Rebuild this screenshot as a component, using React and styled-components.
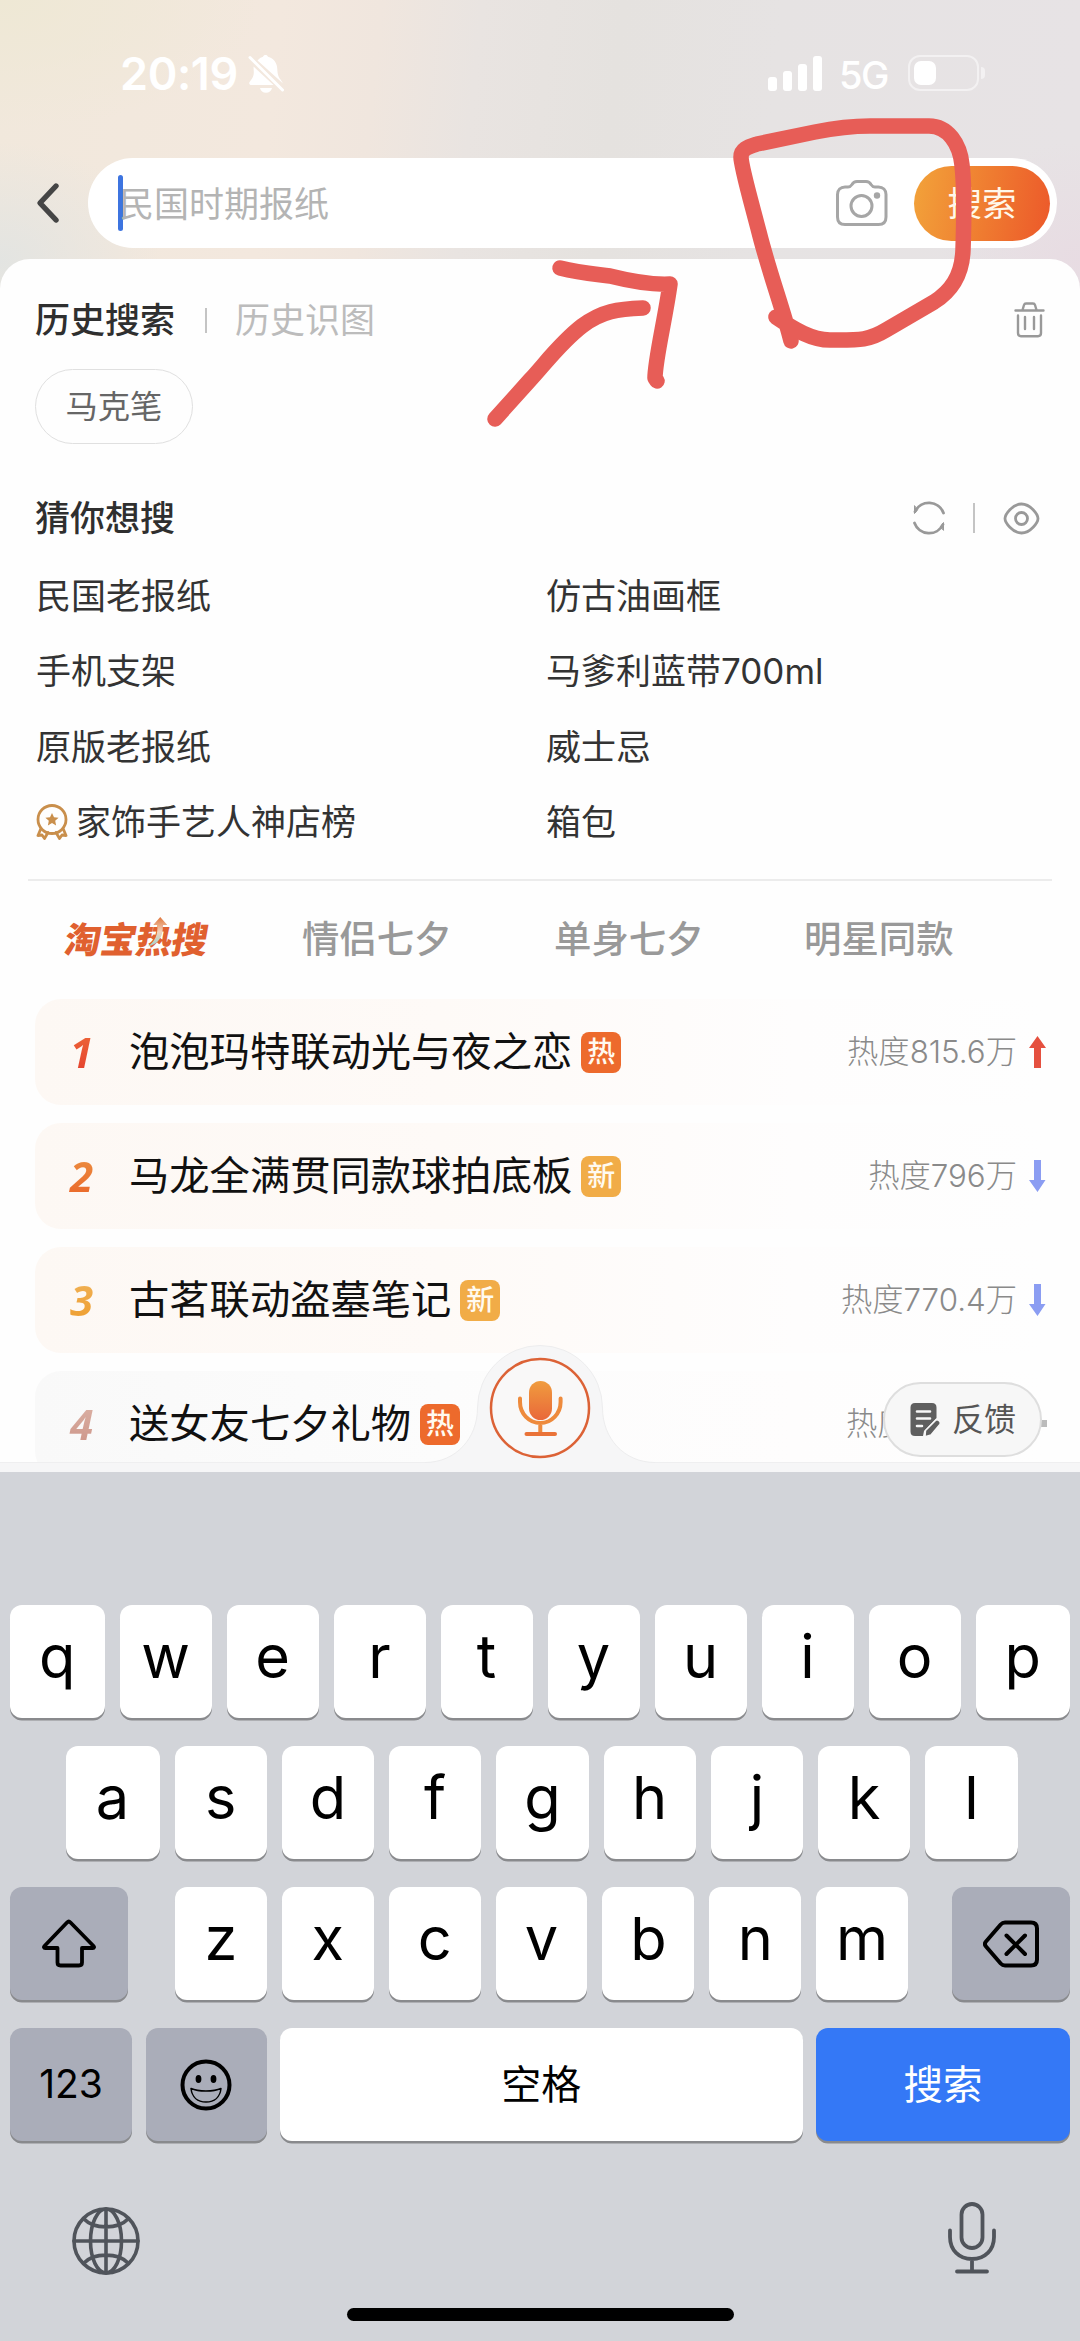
import React from "react";
import styled, { createGlobalStyle } from "styled-components";

const Global = createGlobalStyle`
  * { box-sizing: border-box; }
  body { margin: 0; background: #d2d4d9; }
  svg { display: block; flex: none; }
`;

const Phone = styled.div`
  position: relative;
  width: 1080px;
  height: 2341px;
  display: flex;
  flex-direction: column;
  overflow: hidden;
  font-family: Inter, "Noto Sans CJK SC", sans-serif;
  background:
    radial-gradient(260px 130px at 0 0, rgba(238, 232, 212, 0.9), rgba(238, 232, 212, 0)),
    radial-gradient(160px 120px at 0 262px, rgba(226, 228, 226, 0.95), rgba(226, 228, 226, 0)),
    radial-gradient(140px 120px at 1080px 262px, rgba(232, 218, 226, 0.8), rgba(232, 218, 226, 0)),
    linear-gradient(96deg, #f1e8dc 0, #f3e8de 280px, #f0e6de 380px, #e9e4e1 480px, #e5e2df 620px, #e6e3e3 780px, #e7e3e5 1080px);
`;

const StatusBar = styled.div`
  height: 158px;
  padding: 52px 95px 62px 120px;
  display: flex;
  align-items: center;
  color: #fff;
`;
const Clock = styled.span`
  width: 128px;
  font-size: 45px;
  line-height: 44px;
  font-weight: 600;
  letter-spacing: -0.4px;
`;
const Network = styled.span`
  margin: 2px 21px 0 17px;
  width: 48px;
  font-size: 38px;
  line-height: 44px;
  font-weight: 500;
  letter-spacing: -1.5px;
`;
const Bars = styled.div`
  margin: -2px 0 0 auto;
  display: flex;
  align-items: flex-end;
  gap: 6px;
  height: 35px;
`;
const Bar = styled.i`
  width: 9px;
  height: ${(p) => p.$h}px;
  border-radius: 3px;
  background: #fff;
`;
const Battery = styled.div`
  width: 71px;
  height: 36px;
  margin-top: -3px;
  padding: 4px;
  border: 2px solid rgba(255, 255, 255, 0.5);
  border-radius: 12px;
`;
const Charge = styled.div`
  width: 22px;
  height: 24px;
  border-radius: 7px;
  background: #fff;
`;
const Nub = styled.div`
  width: 4px;
  height: 12px;
  margin: -3px 0 0 2px;
  border-radius: 0 4px 4px 0;
  background: rgba(255, 255, 255, 0.5);
`;

const SearchRow = styled.div`
  height: 90px;
  margin-bottom: 11px;
  padding: 0 23px 0 35px;
  display: flex;
  align-items: center;
  gap: 28px;
`;
const SearchBox = styled.div`
  flex: 1;
  height: 90px;
  padding: 0 7px 0 30px;
  border-radius: 45px;
  background: #fff;
  display: flex;
  align-items: center;
`;
const Caret = styled.i`
  width: 5px;
  height: 56px;
  border-radius: 3px;
  background: #3d74e0;
`;
const Placeholder = styled.span`
  flex: 1;
  margin: 2px 0 0 -4px;
  font-size: 35px;
  line-height: 50px;
  color: #b4b4b4;
`;
const SearchButton = styled.button`
  width: 136px;
  height: 75px;
  margin-left: 26px;
  padding: 2px 0 0;
  border: 0;
  border-radius: 38px;
  font: 400 34.5px/50px Inter, "Noto Sans CJK SC", sans-serif;
  color: #fff8ea;
  background: linear-gradient(100deg, #f2a33a, #ef7a30 55%, #ec582a);
`;

const Panel = styled.main`
  position: relative;
  height: 1213px;
  padding-top: 31px;
  border-radius: 30px 30px 0 0;
  background: #fefefe;
  display: flex;
  flex-direction: column;
`;
const HeadRow = styled.div`
  height: 60px;
  margin-top: ${(p) => p.$top || 0}px;
  padding: 0 ${(p) => p.$right}px 0 35px;
  display: flex;
  align-items: center;
`;
const Heading = styled.h2`
  margin: 0;
  font-size: 35px;
  line-height: 50px;
  font-weight: ${(p) => (p.$muted ? 400 : 500)};
  color: ${(p) => (p.$muted ? "#bcbcbc" : "#2f2f2f")};
`;
const Separator = styled.i`
  width: 2px;
  height: ${(p) => p.$h}px;
  margin: 0 28px 0 ${(p) => p.$left || 30}px;
  background: #c4c4c4;
`;
const Spacer = styled.div`
  flex: 1;
`;
const Chip = styled.div`
  align-self: flex-start;
  height: 75px;
  margin: 19px 0 0 35px;
  padding: 1px 29.5px 0;
  border: 1.5px solid #e0e0e0;
  border-radius: 38px;
  font-size: 32.3px;
  line-height: 71px;
  color: #666;
`;
const Suggestions = styled.div`
  margin: 10px 0 0 36px;
  display: grid;
  grid-template-columns: 510px 1fr;
  grid-auto-rows: 75.5px;
`;
const Suggestion = styled.div`
  display: flex;
  align-items: center;
  gap: 8px;
  font-size: 35px;
  line-height: 50px;
  color: #333;
`;
const Rule = styled.div`
  height: 2px;
  margin: 19px 28px 0;
  background: #ececec;
`;
const Tabs = styled.div`
  height: 60px;
  margin-top: 29px;
  padding-left: 63px;
  display: grid;
  grid-template-columns: 239px 252px 250px 1fr;
  align-items: center;
`;
const Tab = styled.div`
  font-size: 37.4px;
  line-height: 50px;
  font-weight: 500;
  color: #999;
`;
const HotTab = styled.div`
  position: relative;
  width: 145px;
  left: 2px;
  font-size: 36px;
  line-height: 50px;
  font-weight: 900;
  letter-spacing: -0.3px;
  color: #e0602f;
  transform: skewX(-10deg);
`;
const HotArrow = styled.svg`
  position: absolute;
  left: 78px;
  top: 2px;
  transform: skewX(10deg);
`;
const HotList = styled.div`
  height: 463px;
  margin-top: 29px;
  padding: 0 33px 0 35px;
  overflow: hidden;
  display: flex;
  flex-direction: column;
  gap: 18px;
`;
const HotCard = styled.div`
  flex: none;
  height: 106px;
  border-radius: 26px;
  display: flex;
  align-items: center;
  background: linear-gradient(90deg, ${(p) => (p.$plain ? "#f9f9f9, #fcfcfc 40%" : "#fdf8f4, #fefaf7 40%")}, #fefdfd 75%, #fefefe);
`;
const Rank = styled.span`
  width: 94px;
  padding-left: 35px;
  font: italic 700 42px/50px "Noto Sans", "Open Sans", sans-serif;
  color: transparent;
  background: ${(p) => p.$fill};
  background-clip: text;
  -webkit-background-clip: text;
`;
const HotTitle = styled.span`
  font-size: 40.3px;
  line-height: 56px;
  color: #111;
`;
const Badge = styled.span`
  width: 40px;
  height: 41px;
  margin-left: 9px;
  border-radius: 8px;
  text-align: center;
  font-size: 28px;
  line-height: 40px;
  font-weight: 500;
  color: #fffaf0;
  background: ${(p) => (p.$kind === "热" ? "#ed6a2c" : "#f1ac47")};
`;
const Heat = styled.span`
  margin-left: auto;
  width: ${(p) => (p.$covered ? "171px" : "auto")};
  font-size: 31.3px;
  line-height: 44px;
  font-weight: 300;
  color: #8a8a8a;
`;
const Trend = styled.div`
  width: 30px;
  padding-left: 12px;
`;
const Strip = styled.div`
  height: 10px;
  background: #f6f6f7;
  border-top: 1px solid #efeff0;
`;
const VoiceBump = styled.div`
  position: absolute;
  left: 425px;
  top: 1085px;
`;
const Feedback = styled.div`
  position: absolute;
  left: 883px;
  top: 1123px;
  width: 159px;
  height: 75px;
  padding-left: 25px;
  border: 2px solid #dedede;
  border-radius: 38px;
  background: #f7f7f7;
  display: flex;
  align-items: center;
  gap: 11px;
  font-size: 32px;
  line-height: 44px;
  color: #555;
`;

const Keyboard = styled.section`
  flex: 1;
  padding-top: 133px;
  background: #d2d4d9;
  display: flex;
  flex-direction: column;
`;
const KeyRow = styled.div`
  height: 113px;
  margin-bottom: 28px;
  padding: ${(p) => p.$pad || "0 10px"};
  display: flex;
  gap: ${(p) => p.$gap ?? 15}px;
`;
const KeyGroup = styled.div`
  flex: 1;
  display: flex;
  gap: 15px;
  margin: 0 44px 0 47px;
`;
const Key = styled.div`
  flex: ${(p) => (p.$w ? "none" : 1)};
  width: ${(p) => (p.$w ? `${p.$w}px` : "auto")};
  height: 113px;
  border-radius: 12px;
  display: flex;
  align-items: center;
  justify-content: center;
  font-size: ${(p) => p.$size || 59.5}px;
  font-weight: 400;
  line-height: 80px;
  padding-bottom: ${(p) => p.$lift ?? 11}px;
  color: ${(p) => (p.$tone === "blue" ? "#fff" : "#000")};
  background: ${(p) => (p.$tone === "blue" ? "#3478f6" : p.$tone === "gray" ? "#aaadb9" : "#fff")};
  box-shadow: 0 2.5px 0 #898a8d;
`;
const DockRow = styled.div`
  height: 75px;
  margin-top: 34px;
  padding: 0 84px 0 72px;
  display: flex;
  align-items: center;
  justify-content: space-between;
`;
const DictationButton = styled.div`
  margin-top: -6px;
`;
const HomeBar = styled.div`
  width: 387px;
  height: 13px;
  margin: 30px auto 0;
  border-radius: 7px;
  background: #000;
`;
const Annotation = styled.svg`
  position: absolute;
  left: 480px;
  top: 100px;
  pointer-events: none;
`;

const line = (color, w) => ({ fill: "none", stroke: color, strokeWidth: w, strokeLinecap: "round", strokeLinejoin: "round" });

const BellOff = () => (
  <svg width="36" height="40" viewBox="0 0 36 40">
    <path fill="#fff" d="M9.5 6.5C11.5 4.2 13.8 3.1 15 2.8 15.4 1.6 16.4 1 17.5 1s2.100.6 2.500 1.800C26 4.500 29 9 29.300 15c.2 5 .9 7.500 3.200 10.500L35 29.500zM5.500 12.500L25.500 31H3.500C1.500 31 .7 29.500 1.600 28 3.500 25 5.800 23.500 5.800 18zM12 34h12c-.6 3-3 4.700-6 4.700S12.600 37 12 34z" />
    <path d="M2 3.500L34.500 36" {...line("#fff", 3)} />
  </svg>
);
const Back = () => (
  <svg width="25" height="44" viewBox="0 0 25 44">
    <path d="M21 5L5 22l16 17" {...line("#454545", 5.4)} />
  </svg>
);
const Camera = () => (
  <svg width="52" height="47" viewBox="0 0 52 47">
    <path d="M9 7h3c2 0 3-1 4-2.500 1-2 2.500-3 5-3h9c2.500 0 4 1 5 3C36 6 37 7 39 7h3.500c4.500 0 7.500 3 7.500 7.500V37c0 5-2.500 7.500-7.500 7.500H9C4 44.500 1.500 42 1.500 37V14.500C1.500 10 4.500 7 9 7z" {...line("#a6a6a6", 3)} />
    <circle cx="25.500" cy="26" r="10.500" {...line("#a6a6a6", 3)} />
    <circle cx="41" cy="15.500" r="3.200" fill="#a6a6a6" />
  </svg>
);
const Trash = () => (
  <svg width="31" height="36" viewBox="0 0 31 36" {...line("#999", 2.4)}>
    <path d="M1.500 8.500h28M8.500 8l1.500-5c.3-1 .9-1.500 2-1.500h7c1.100 0 1.700.5 2 1.500L22.500 8M4 13.500V31c0 2.200 1 3.200 3 3.200h17c2 0 3-1 3-3.200V13.500M11 15v12M20 15v12" />
  </svg>
);
const Refresh = () => (
  <svg width="34" height="36" viewBox="0 0 34 36" {...line("#999", 2.8)}>
    <path d="M3 11.500A15.500 15.500 0 0 1 31.500 13M2.500 23A15.500 15.500 0 0 0 31 24.500" />
    <path d="M2.500 6v7.500L5.500 10zM31.500 30v-7.500l-3 4z" fill="#999" strokeWidth="1" />
  </svg>
);
const Eye = () => (
  <svg width="37" height="35" viewBox="0 0 37 35" {...line("#999", 2.800)}>
    <path d="M2 17.500C2 13.500 9.500 3 18.500 3S35 13.500 35 17.500 27.500 32 18.500 32 2 21.500 2 17.500z" />
    <circle cx="18.500" cy="17.500" r="6" />
  </svg>
);
const Medal = () => (
  <svg width="32" height="36" viewBox="0 0 32 36" {...line("#c98f4c", 2.800)}>
    <circle cx="16" cy="15.500" r="14" />
    <path d="M16 9l2 4.200 4.600.5-3.400 3.100.9 4.600-4.100-2.300-4.100 2.300.9-4.600-3.400-3.100 4.600-.5z" fill="#c98f4c" stroke="none" />
    <path d="M4.500 25.500L2 31.500l4-.5 2.500 3.500 3.500-6M27.500 25.500l2.500 6-4-.5-2.500 3.500-3.500-6" />
  </svg>
);
const Arrow = ({ up }) => (
  <svg width="17" height="32" viewBox="0 0 17 32">
    {up ? <path fill="#e5503f" d="M8.500 0L17 12h-5v20H5V12H0z" /> : <path fill="#8b9df2" d="M5 0h7v20h4.500L8.500 32 0 20h5z" />}
  </svg>
);
const Flat = () => (
  <svg width="18" height="8" viewBox="0 0 18 8">
    <path fill="#bbb" d="M0 0h18v7H0z" />
  </svg>
);
const Note = () => (
  <svg width="31" height="35" viewBox="0 0 31 35">
    <path fill="#5f5f5f" d="M5 1h17c3 0 4.500 1.500 4.500 4.500V16L14 29l-1 5H5c-3 0-4.500-1.500-4.500-4.500v-24C.5 2.500 2 1 5 1z" />
    <path d="M7 9.500h13M7 16.500h13M7 24h5" {...line("#f7f7f7", 2.600)} />
    <path fill="#5f5f5f" stroke="#f7f7f7" strokeWidth="1.500" d="M25.500 18.500c2-2 6 1.500 4.300 4L21 33l-6 1.800.5-6.300z" />
  </svg>
);
const Voice = () => (
  <svg width="230" height="120" viewBox="0 0 230 120">
    <defs>
      <linearGradient id="mic" x1="0" y1="0" x2="0" y2="1">
        <stop offset="0" stopColor="#f09c3e" />
        <stop offset="1" stopColor="#e9683a" />
      </linearGradient>
    </defs>
    <path fill="#f6f6f7" d="M0 118.500C31 118.500 52.500 94 52.500 64a62.500 62.500 0 0 1 125 0C177.500 94 199 118.500 230 118.500V120H0z" />
    <path fill="none" stroke="#ededee" strokeWidth="1" d="M0 118.500C31 118.500 52.500 94 52.500 64a62.500 62.500 0 0 1 125 0C177.500 94 199 118.500 230 118.500" />
    <circle cx="115" cy="64" r="49" fill="#f9f8f8" stroke="#dc6236" strokeWidth="2.500" />
    <rect x="104" y="37" width="23" height="39" rx="11.500" fill="url(#mic)" />
    <path d="M95 54.500V58a20.300 21 0 0 0 40.600 0v-3.500M115.300 80v10" {...line("#ee8a3c", 4)} />
    <path d="M101.500 90h28.500" {...line("#ea7338", 4)} />
  </svg>
);
const Shift = () => (
  <svg width="54" height="49" viewBox="0 0 54 49">
    <path d="M25 3.500c1.200-1.200 2.300-1.200 3.500 0l23 23.500c1 1 .6 2-.7 2H40v14.500c0 2-1 3-3 3H18.500c-2 0-3-1-3-3V29H3.200c-1.300 0-1.700-1-.7-2z" {...line("#000", 3.800)} />
  </svg>
);
const Delete = () => (
  <svg width="56" height="48" viewBox="0 0 56 48" {...line("#000", 4)}>
    <path d="M22 2.500h26c4 0 6 2 6 6v31c0 4-2 6-6 6H22c-1.800 0-3-.6-4.300-2L3 26.500c-1.500-1.700-1.500-3.300 0-5L17.700 4.500c1.300-1.400 2.500-2 4.300-2zM23.500 15.500l18.500 18.500M42 15.500L23.500 34" />
  </svg>
);
const Smile = () => (
  <svg width="52" height="52" viewBox="0 0 52 52">
    <circle cx="26" cy="26" r="23.500" {...line("#000", 4)} />
    <ellipse cx="18.500" cy="20" rx="2.900" ry="4" />
    <ellipse cx="33.500" cy="20" rx="2.900" ry="4" />
    <path d="M11 29.500c4 1.800 9 2.500 15 2.500s11-.7 15-2.500C40 38 34.500 43 26 43S12 38 11 29.500z" {...line("#000", 1.500)} />
    <path d="M13 31.800c4 1.300 8 2 13 2s9-.7 13-2l-.8 2.700c-3.500 1-7.500 1.500-12.200 1.500s-8.700-.5-12.200-1.500z" fill="#aaadb9" />
  </svg>
);
const Globe = () => (
  <svg width="68" height="68" viewBox="0 0 68 68" {...line("#50545b", 3.600)}>
    <circle cx="34" cy="34" r="32" />
    <ellipse cx="34" cy="34" rx="15.500" ry="32" />
    <path d="M34 2v64M2 34h64M12 12c10 10.500 34 10.500 44 0M12 56c10-10.500 34-10.500 44 0" />
  </svg>
);
const DictMic = () => (
  <svg width="48" height="72" viewBox="0 0 48 72" {...line("#50545b", 3.800)}>
    <rect x="13.500" y="2" width="21" height="44" rx="10.500" />
    <path d="M2 28.500v6.500c0 13 9 22 22 22s22-9 22-22v-6.500M24 57v12M9 69.500h30" />
  </svg>
);

const suggestions = ["民国老报纸", "仿古油画框", "手机支架", "马爹利蓝带700ml", "原版老报纸", "威士忌", "家饰手艺人神店榜", "箱包"];
const hot = [
  { title: "泡泡玛特联动光与夜之恋", badge: "热", heat: "热度815.6万", trend: "up", fill: "linear-gradient(#ee6a3a, #e43d2c)" },
  { title: "马龙全满贯同款球拍底板", badge: "新", heat: "热度796万", trend: "down", fill: "linear-gradient(#ec9242, #ea6428)" },
  { title: "古茗联动盗墓笔记", badge: "新", heat: "热度770.4万", trend: "down", fill: "linear-gradient(#f0b35a, #ee9c2c)" },
  { title: "送女友七夕礼物", badge: "热", heat: "热度", trend: "flat", fill: "linear-gradient(#dcb3a6, #cc9488)" },
];
const edgeKeys = { q: 94.5, p: 94.5, a: 94 };
const letters = (s) => s.split("").map((c) => <Key key={c} $w={edgeKeys[c]}>{c}</Key>);

export default function App() {
  return (
    <Phone>
      <Global />
      <StatusBar>
        <Clock>20:19</Clock>
        <BellOff />
        <Bars>
          {[14, 20, 27, 35].map((h) => <Bar key={h} $h={h} />)}
        </Bars>
        <Network>5G</Network>
        <Battery><Charge /></Battery>
        <Nub />
      </StatusBar>
      <SearchRow>
        <Back />
        <SearchBox>
          <Caret />
          <Placeholder>民国时期报纸</Placeholder>
          <Camera />
          <SearchButton>搜索</SearchButton>
        </SearchBox>
      </SearchRow>

      <Panel>
        <HeadRow $right={35}>
          <Heading>历史搜索</Heading>
          <Separator $h={25} />
          <Heading $muted>历史识图</Heading>
          <Spacer />
          <Trash />
        </HeadRow>
        <Chip>马克笔</Chip>
        <HeadRow $top={44} $right={40}>
          <Heading>猜你想搜</Heading>
          <Spacer />
          <Refresh />
          <Separator $h={30} $left={27} />
          <Eye />
        </HeadRow>
        <Suggestions>
          {suggestions.map((s) => (
            <Suggestion key={s}>
              {s.startsWith("家饰") && <Medal />}
              {s}
            </Suggestion>
          ))}
        </Suggestions>
        <Rule />
        <Tabs>
          <HotTab>
            淘宝热搜
            <HotArrow width="24" height="32" viewBox="0 0 24 32">
              <defs>
                <linearGradient id="rise" x1="0" y1="0" x2="0" y2="1">
                  <stop offset="0" stopColor="#e0763c" />
                  <stop offset="0.5" stopColor="#f3d3bd" />
                  <stop offset="1" stopColor="#9fd4cd" />
                </linearGradient>
              </defs>
              <path fill="url(#rise)" d="M16 0l7 8h-4.500C19.500 19 14 28 3 29.500 11 25 14 17 13 8H9z" />
            </HotArrow>
          </HotTab>
          <Tab>情侣七夕</Tab>
          <Tab>单身七夕</Tab>
          <Tab>明星同款</Tab>
        </Tabs>
        <HotList>
          {hot.map((h, i) => (
            <HotCard key={h.title} $plain={i === 3}>
              <Rank $fill={h.fill}>{i + 1}</Rank>
              <HotTitle>{h.title}</HotTitle>
              <Badge $kind={h.badge}>{h.badge}</Badge>
              <Heat $covered={h.trend === "flat"}>{h.heat}</Heat>
              <Trend>{h.trend === "flat" ? <Flat /> : <Arrow up={h.trend === "up"} />}</Trend>
            </HotCard>
          ))}
        </HotList>
        <Strip />
        <VoiceBump><Voice /></VoiceBump>
        <Feedback><Note />反馈</Feedback>
      </Panel>

      <Keyboard>
        <KeyRow>{letters("qwertyuiop")}</KeyRow>
        <KeyRow $pad="0 62.5px 0 65.5px">{letters("asdfghjkl")}</KeyRow>
        <KeyRow $gap={0}>
          <Key $w={118} $tone="gray" $lift={0}><Shift /></Key>
          <KeyGroup>{letters("zxcvbnm")}</KeyGroup>
          <Key $w={118} $tone="gray" $lift={0}><Delete /></Key>
        </KeyRow>
        <KeyRow $gap={13.5}>
          <Key $w={122} $tone="gray" $size={39} $lift={2}>123</Key>
          <Key $w={121} $tone="gray" $lift={0}><Smile /></Key>
          <Key $size={40} $lift={0}>空格</Key>
          <Key $w={254} $tone="blue" $size={39.5} $lift={0}>搜索</Key>
        </KeyRow>
        <DockRow>
          <Globe />
          <DictationButton><DictMic /></DictationButton>
        </DockRow>
        <HomeBar />
      </Keyboard>

      <Annotation width="520" height="340" viewBox="480 100 520 340" {...line("#e75d57", 15.5)}>
        <path d="M791 341C784 312 769 272 759 232 748 190 741 166 741 157 741 149 748 147 757 144L815 132C835 128 850 126 870 126L929 126C948 126 960 144 962 165 965 190 964 220 963 250 962 277 950 292 934 302L886 330C868 341 858 340 830 340 812 340 795 330 776 317" />
        <path d="M560 268C580 273 595 274 610 276 630 281 650 285 670 284 665 320 655 360 655 378L657 381" />
        <path d="M495 419L530 380C545 364 560 343 582 326 602 311 618 309 643 308" />
      </Annotation>
    </Phone>
  );
}
